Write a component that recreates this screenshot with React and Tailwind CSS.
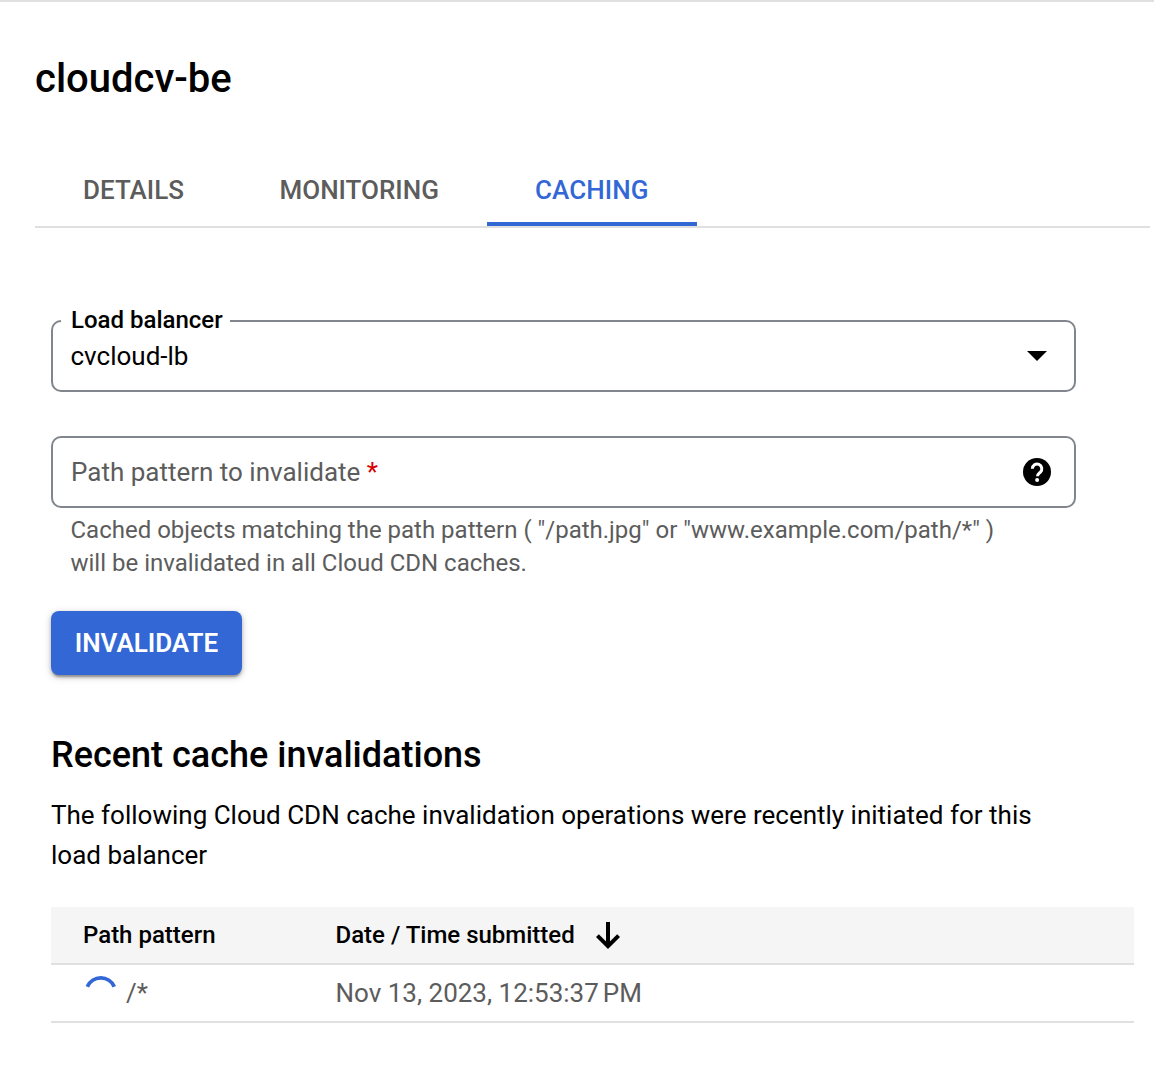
const Line = ({ className = "", children }) => (
  <span className={"block whitespace-nowrap " + className}>{children}</span>
);

export default function App() {
  return (
    <main className="h-[1070px] w-[1154px] overflow-hidden border-t-2 border-[#e0e0e0] bg-white pl-[35px] font-['Roboto',sans-serif] text-black">
      <h1 className="mt-[53px] h-[48px] text-[40px] leading-[48px] font-medium">cloudcv-be</h1>
      <nav className="mt-[49px] mr-1 flex h-[76px] border-b-2 border-[#e0e0e0] text-[26px] leading-[76px] font-medium text-[#5c5c5c]">
        <Line className="w-[197px] pl-12">DETAILS</Line>
        <Line className="w-[255px] pl-[47.5px]">MONITORING</Line>
        <Line className="h-[74px] w-[210px] border-b-4 border-[#3367d6] pl-12 tracking-[0.1px] text-[#3367d6]">CACHING</Line>
      </nav>
      <section className="ml-4 pt-[92px]">
        <div className="relative flex h-[72px] w-[1025px] items-center justify-between rounded-[10px] border-2 border-[#80868b] pr-[27px] pl-[17.5px] text-[26px]">
          <span className="absolute -top-[18px] left-2 w-[169px] bg-white pl-[10px] text-[24px] leading-[32px] font-medium whitespace-nowrap">Load balancer</span>
          <span>cvcloud-lb</span>
          <svg width="20" height="10" viewBox="0 0 20 10"><path d="M0 0h20L10 10z" /></svg>
        </div>
        <div className="mt-[44px] flex h-[72px] w-[1025px] items-center justify-between rounded-[10px] border-2 border-[#80868b] pr-[23px] pl-[18px] text-[26px] text-[#5c5c5c]">
          <span>Path pattern to invalidate <span className="text-[#d50000]">*</span></span>
          <svg width="28" height="28" viewBox="0 0 28 28">
            <circle cx="14" cy="14" r="14" />
            <path d="M9.4 10.8a4.7 4.7 0 1 1 8 3.3c-1.7 1.6-2.9 2.2-2.9 4.1" fill="none" stroke="#fff" strokeWidth="3" />
            <circle cx="14.1" cy="22.1" r="2" fill="#fff" />
          </svg>
        </div>
        <p className="mt-[6px] pl-[19.5px] text-[24px] text-[#5c5c5c]">
          <Line className="h-[33px] leading-[33px]">Cached objects matching the path pattern ( "/path.jpg" or "www.example.com/path/*" )</Line>
          <Line className="leading-[32px]">will be invalidated in all Cloud CDN caches.</Line>
        </p>
        <button className="mt-8 block h-16 w-[191px] rounded-lg bg-[#3367d6] text-[26px] font-semibold tracking-[-0.05px] text-white shadow-[0_3px_2px_-1px_rgba(0,0,0,.25),0_2px_4px_rgba(0,0,0,.2),0_2px_8px_rgba(0,0,0,.16)]">INVALIDATE</button>
        <h2 className="mt-[56px] text-[36px] leading-[48px] font-medium">Recent cache invalidations</h2>
        <p className="mt-4 text-[26px] leading-[40px]">
          <Line>The following Cloud CDN cache invalidation operations were recently initiated for this</Line>
          <Line>load balancer</Line>
        </p>
        <div className="mt-8 mr-5">
          <div className="flex h-[58px] items-center border-b-2 border-[#e0e0e0] bg-[#f5f5f5] pl-8 text-[24px] font-medium">
            <Line className="w-[252.5px]">Path pattern</Line>
            <Line>Date / Time submitted</Line>
            <svg className="mt-[2px] ml-5" width="26" height="28" viewBox="0 0 26 28" fill="none" stroke="#000" strokeWidth="4"><path d="M13 0v24M2.4 13.6L13 24.2L23.6 13.6" /></svg>
          </div>
          <div className="flex h-[58px] items-center border-b-2 border-[#e0e0e0] pl-8 text-[26px] text-[#5c5c5c]">
            <div className="flex w-[252.5px] items-center">
              <svg className="mr-[7px]" width="36" height="36" viewBox="0 0 36 36" fill="none" stroke="#3367d6" strokeWidth="3.8"><path d="M4.3 11.7A14.8 14.8 0 0 1 31.3 11.7" /></svg>
              <Line>/*</Line>
            </div>
            <Line>Nov 13, 2023, 12:53:37 <span className="-ml-[2.5px]">PM</span></Line>
          </div>
        </div>
      </section>
    </main>
  );
}
